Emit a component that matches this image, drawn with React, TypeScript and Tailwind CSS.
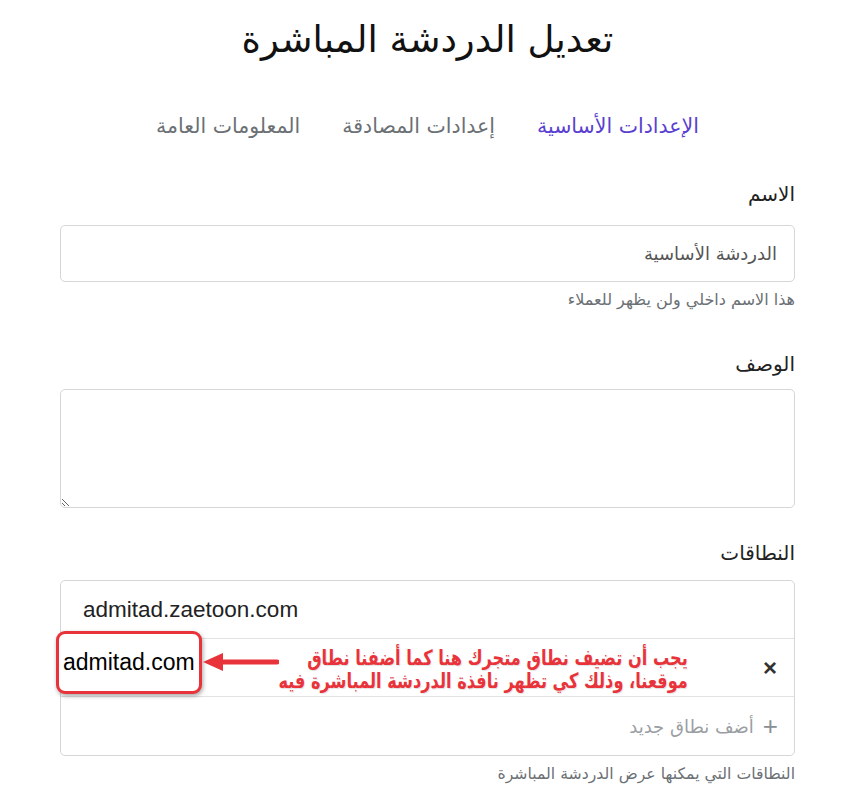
import React from "react";

export default function App() {
  const ar = { fontFamily: '"DejaVu Sans", "Noto Sans", sans-serif' };
  const lat = { fontFamily: '"Liberation Sans", Arial, sans-serif' };
  return (
    <div dir="rtl" className="w-[852px] h-[798px] bg-white overflow-hidden" style={ar}>
      <div className="w-[735px] mx-auto mr-[57px]">
        <h1 className="text-center text-[37px] leading-[44px] pt-[18px] text-[#111]">تعديل الدردشة المباشرة</h1>
        <div className="flex justify-center gap-[42px] mt-[50px] text-[20.5px] leading-[28px]">
          <span className="text-[#5a3fd0]">الإعدادات الأساسية</span>
          <span className="text-[#6b7075]">إعدادات المصادقة</span>
          <span className="text-[#6b7075]">المعلومات العامة</span>
        </div>

        <div className="mt-[40px]">
          <div className="text-[20px] leading-[28px] text-[#222]">الاسم</div>
          <div className="mt-[17px] h-[57px] border border-[#d6d6d6] rounded-[5px] flex items-center px-[17px] text-[18px] text-[#555]">الدردشة الأساسية</div>
          <div className="mt-[8px] text-[16px] leading-[20px] text-[#6b7075]">هذا الاسم داخلي ولن يظهر للعملاء</div>
        </div>

        <div className="mt-[40px]">
          <div className="text-[20px] leading-[28px] text-[#222]">الوصف</div>
          <textarea className="block mt-[11px] w-full h-[119px] border border-[#d6d6d6] rounded-[5px] resize-y" />
        </div>

        <div className="mt-[31px]">
          <div className="text-[20px] leading-[28px] text-[#222]">النطاقات</div>
          <div className="relative mt-[13px] border border-[#d6d6d6] rounded-[5px]">
            <div className="h-[58px] flex items-center px-[22px] border-b border-[#e2e2e2]">
              <span dir="ltr" className="w-full text-left text-[22.5px] text-[#222]" style={lat}>admitad.zaetoon.com</span>
            </div>
            <div className="h-[58px] flex items-center pr-[17px] pl-[22px] border-b border-[#e2e2e2]">
              <span className="text-[24px] font-bold text-[#333] leading-none" style={lat}>×</span>
            </div>
            <div className="h-[58px] flex items-center gap-[9px] px-[16px] text-[18px] text-[#9a9ea3]">
              <span className="text-[26px] leading-none text-[#8a8f94]" style={lat}>+</span>
              <span>أضف نطاق جديد</span>
            </div>

            {/* annotation */}
            <div dir="ltr" className="absolute left-[-5px] top-[50px] w-[146px] h-[63px] border-[3px] border-[#e8333b] rounded-[9px] bg-white shadow-[1px_2px_4px_rgba(0,0,0,0.35)] flex items-center justify-start pl-[4px]">
              <span className="text-[23px] text-black" style={lat}>admitad.com</span>
            </div>
            <svg className="absolute left-[140px] top-[70px]" width="78" height="22" viewBox="0 0 78 22">
              <line x1="18" y1="11" x2="76" y2="11" stroke="#e8333b" strokeWidth="5" strokeLinecap="round" />
              <polygon points="2,11 22,2 22,20" fill="#e8333b" />
            </svg>
            <div className="absolute left-[248px] top-[66px] w-[428px] text-center text-[21px] leading-[23px] font-bold text-[#e8333b] whitespace-nowrap scale-x-[0.77]" style={{ textShadow: "0 0 2px #fff, 1px 1px 1px rgba(0,0,0,0.15)" }}>
              <div>يجب أن تضيف نطاق متجرك هنا كما أضفنا نطاق</div>
              <div>موقعنا، وذلك كي تظهر نافذة الدردشة المباشرة فيه</div>
            </div>
          </div>
          <div className="mt-[8px] text-[15.7px] leading-[20px] text-[#6b7075]">النطاقات التي يمكنها عرض الدردشة المباشرة</div>
        </div>
      </div>
    </div>
  );
}
